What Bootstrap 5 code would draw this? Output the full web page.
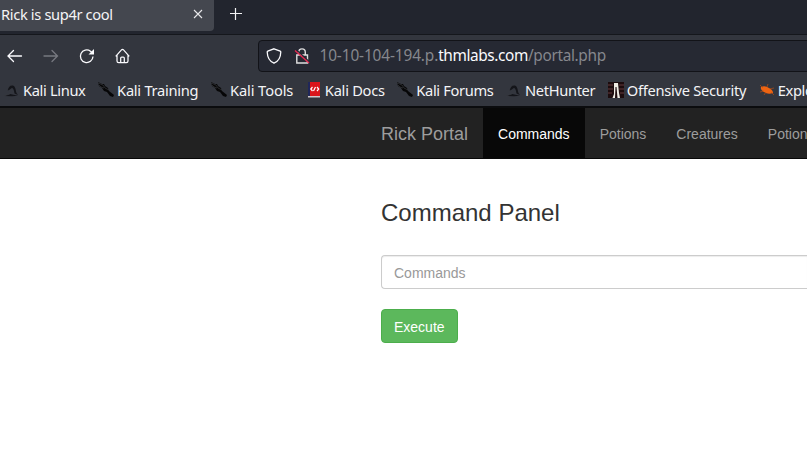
<!DOCTYPE html>
<html lang="en">
<head>
<meta charset="utf-8">
<meta name="viewport" content="width=device-width, initial-scale=1">
<title>Rick is sup4r cool</title>
<link rel="stylesheet" href="https://cdn.jsdelivr.net/npm/bootstrap@5.3.0/dist/css/bootstrap.min.css">
<style>
body{width:807px;height:458px;font-family:"Liberation Sans",Arial,sans-serif;font-size:14px;line-height:20px;color:#333}
svg{display:block;flex:none}
.chrome{font-family:"Noto Sans",sans-serif;font-size:14.67px;letter-spacing:-.35px;color:#f4f4f6;background:#33363e}
.tabstrip{height:35px;background:#22252e;border-bottom:1px solid #15171c}
.tab-active{width:214px;height:31px;background:#44474f;border-radius:0 0 4px 0;padding:0 11px 4px 1px;letter-spacing:-.35px}
.toolbar{height:41px;padding-left:7px}
.tool-gap{margin-left:20px}
.address{width:700px;height:32px;margin-left:127px;padding-left:7px;background:#262933;border:1px solid #121318;border-radius:4px;font-size:15.4px;letter-spacing:-.34px;color:#85878d}
.url{margin-left:9.500px}
.url-host{letter-spacing:-.12px}
.url-domain{letter-spacing:-.4px;color:#fbfbfe}
.bookmarks{height:32px;padding:0 0 2px 4px;border-bottom:2px solid #0b0c0e}
.bookmark{margin-right:12.6px;gap:3px}
.bookmark-wide{letter-spacing:-.27px}
.bookmark-wider{letter-spacing:-.1px}
.portal-nav{height:51px;background:#222;border-bottom:1px solid #080808;padding-left:381px}
.portal-nav a{color:#9d9d9d;padding:16px 15px 14px;text-decoration:none;height:50px}
.portal-nav .portal-brand{font-size:18px;padding-left:0}
.portal-nav a.current{color:#fff;background:#080808}
.panel{margin-left:381px;padding-top:41px}
.panel h3{font-size:24px;line-height:26px;font-weight:400;margin-bottom:29px}
.panel .form-control{height:34px;padding:7px 12px 5px;font-size:14px;line-height:20px;border-color:#ccc;border-right:0;border-radius:4px 0 0 4px;box-shadow:inset 0 1px 1px rgba(0,0,0,.075);margin-bottom:20px}
.panel .form-control::placeholder{color:#999}
.panel .btn{height:34px;padding:7px 12px 5px;font-size:14px;line-height:20px;border-radius:4px;background:#5cb85c;border-color:#4cae4c}
</style>
<script defer src="https://cdn.jsdelivr.net/npm/bootstrap@5.3.0/dist/js/bootstrap.bundle.min.js"></script>
</head>
<body class="bg-white overflow-hidden">
<svg width="0" height="0" class="position-absolute">
<defs>
<symbol id="dragon" viewBox="0 0 16 16"><path d="M3.5 8.5C4 4.500 6.500 2.500 9 3.500c2.500 1 2.500 4 3.500 7.500l1.500 2-3.500-1.500C10 8.500 9.500 6 8 6c-1.500 0-2 2.500-4.500 2.500zM0 14l6-2 3.500.8 4.500 1-6 .4z" fill="#14151a"/><path d="M3.500 8.500C4 5 6 3 8.500 3.300M0 14l6-2" fill="none" stroke="#3e4147" stroke-width=".5"/></symbol>
<symbol id="blade" viewBox="0 0 16 16"><path d="M0 0l4 2 2 0 1 2 3 2 1 3 5 4-1 2-3-1-3-4-3-1-2-3-3-2z" fill="#060607"/><path d="M0 1l5 2 2 3 4 2M1 3l2 2 3 1" fill="none" stroke="#5b5d62" stroke-width=".4"/></symbol>
</defs></svg>
<div class="chrome overflow-hidden">
 <div class="tabstrip d-flex align-items-start">
  <div class="tab-active d-flex align-items-center justify-content-between text-nowrap"><span>Rick is sup4r cool</span>
   <svg width="10" height="10" viewBox="0 0 10 10"><path d="M1 1l8 8M9 1L1 9" stroke="#e8e8ea" stroke-width="1.1"/></svg></div>
  <svg class="ms-3" width="12" height="27" viewBox="0 0 12 27"><path d="M5.500 8v12M0 13.500h12" stroke="#f4f4f6" stroke-width="1.2"/></svg>
 </div>
 <div class="toolbar d-flex align-items-center">
  <svg width="16" height="16" viewBox="0 0 16 16"><path d="M14.500 8H2M6.500 2.500L1 8l5.500 5.500" fill="none" stroke="#fbfbfe" stroke-width="1.3" stroke-linecap="round"/></svg>
  <svg class="tool-gap" width="16" height="16" viewBox="0 0 16 16"><path d="M1 8h13M9 2.500L14.500 8 9 13.500" fill="none" stroke="#777980" stroke-width="1.3" stroke-linecap="round"/></svg>
  <svg class="tool-gap" width="16" height="16" viewBox="0 0 16 16"><path d="M14 8.500A6.300 6.300 0 1 1 11.500 3.200L13.500 5" fill="none" stroke="#fbfbfe" stroke-width="1.3"/><path d="M15 1v5.500H9.500z" fill="#fbfbfe"/></svg>
  <svg class="tool-gap" width="16" height="16" viewBox="0 0 16 16"><path d="M.7 8.300L6.700 1.700q.8-.8 1.600 0l6 6.600M2 7v6q0 1.700 1.700 1.700h7.600q1.700 0 1.700-1.700V7M5.700 14.700V10q0-1 1-1h1.600q1 0 1 1v4.700" fill="none" stroke="#fbfbfe" stroke-width="1.25"/></svg>
  <div class="address d-flex align-items-center flex-shrink-0 text-nowrap">
   <svg width="16" height="16" viewBox="0 0 16 16"><path d="M8 .8l6.200 2.300q.7.3.6 1C14.600 9.500 12.300 13.600 8 15.200 3.700 13.600 1.400 9.500 1.200 4.100q-.1-.7.6-1z" fill="none" stroke="#fbfbfe" stroke-width="1.3"/></svg>
   <svg class="ms-2 ps-1" width="20" height="16" viewBox="0 0 16 16"><path d="M4.700 7V4.200a3.300 3.300 0 0 1 6.600 0V7M2.800 7h10.700v8H2.800z" fill="none" stroke="#dededf" stroke-width="1.4"/><path d="M2 1.500l14 13" stroke="#262933" stroke-width="1.5"/><path d="M1 2.500l14 12.500" stroke="#e22850" stroke-width="1.4"/></svg>
   <div class="url"><span class="url-host">10-10-104-194.p.</span><span class="url-domain">thmlabs.com</span>/portal.php</div>
  </div>
 </div>
 <div class="bookmarks d-flex align-items-center text-nowrap">
  <div class="bookmark d-flex align-items-center"><svg width="16" height="16"><use href="#dragon"/></svg>Kali Linux</div>
  <div class="bookmark bookmark-wide d-flex align-items-center"><svg width="16" height="16"><use href="#blade"/></svg>Kali Training</div>
  <div class="bookmark bookmark-wider d-flex align-items-center"><svg width="16" height="16"><use href="#blade"/></svg>Kali Tools</div>
  <div class="bookmark bookmark-wide d-flex align-items-center"><svg width="16" height="16" viewBox="0 0 16 16"><path d="M2 0h12v15H2z" fill="#d9151b"/><path d="M2 0h2v15H2z" fill="#20275a"/><path d="M2 14h12v1.500H2z" fill="#cfc7cb"/><path d="M6.500 5L4.800 7l1.700 2M11 5l1.700 2L11 9M7.500 9l2-4" fill="none" stroke="#fff" stroke-width="1.2"/></svg>Kali Docs</div>
  <div class="bookmark d-flex align-items-center"><svg width="16" height="16"><use href="#blade"/></svg>Kali Forums</div>
  <div class="bookmark d-flex align-items-center"><svg width="16" height="16"><use href="#dragon"/></svg>NetHunter</div>
  <div class="bookmark bookmark-wide d-flex align-items-center"><svg width="16" height="16" viewBox="0 0 16 16"><path d="M0 0h16v16H0z" fill="#1c0c0e"/><path d="M0 3h5M11 3h5M0 7h5M11 7h5M0 11h4M12 11h4" stroke="#643b3c"/><path d="M6 1h4l1 10 1 5H9.500L8.500 5h-1L7 16H4.500L6 12z" fill="#eeebe3"/></svg>Offensive Security</div>
  <div class="bookmark d-flex align-items-center"><svg width="16" height="16" viewBox="0 0 16 16"><path d="M2 5q4-2 8 1 4 2 4 5-5 2-9-1Q1 8 2 5z" fill="#ee6412"/><path d="M4 6L1 3M8 5l1-3M11 7l4-1M5 9l-4 1M7 10l-2 3M12 10l3 3" stroke="#c8530f" stroke-width=".6"/></svg>Exploit-DB</div>
 </div>
</div>
<nav class="portal-nav d-flex text-nowrap overflow-hidden">
 <a class="portal-brand" href="#">Rick Portal</a><a class="current" href="#">Commands</a><a href="#">Potions</a><a href="#">Creatures</a><a href="#">Potions</a>
</nav>
<main class="panel">
 <h3>Command Panel</h3>
 <input class="form-control" type="text" placeholder="Commands" aria-label="Commands">
 <button class="btn btn-success" type="button">Execute</button>
</main>
</body>
</html>
